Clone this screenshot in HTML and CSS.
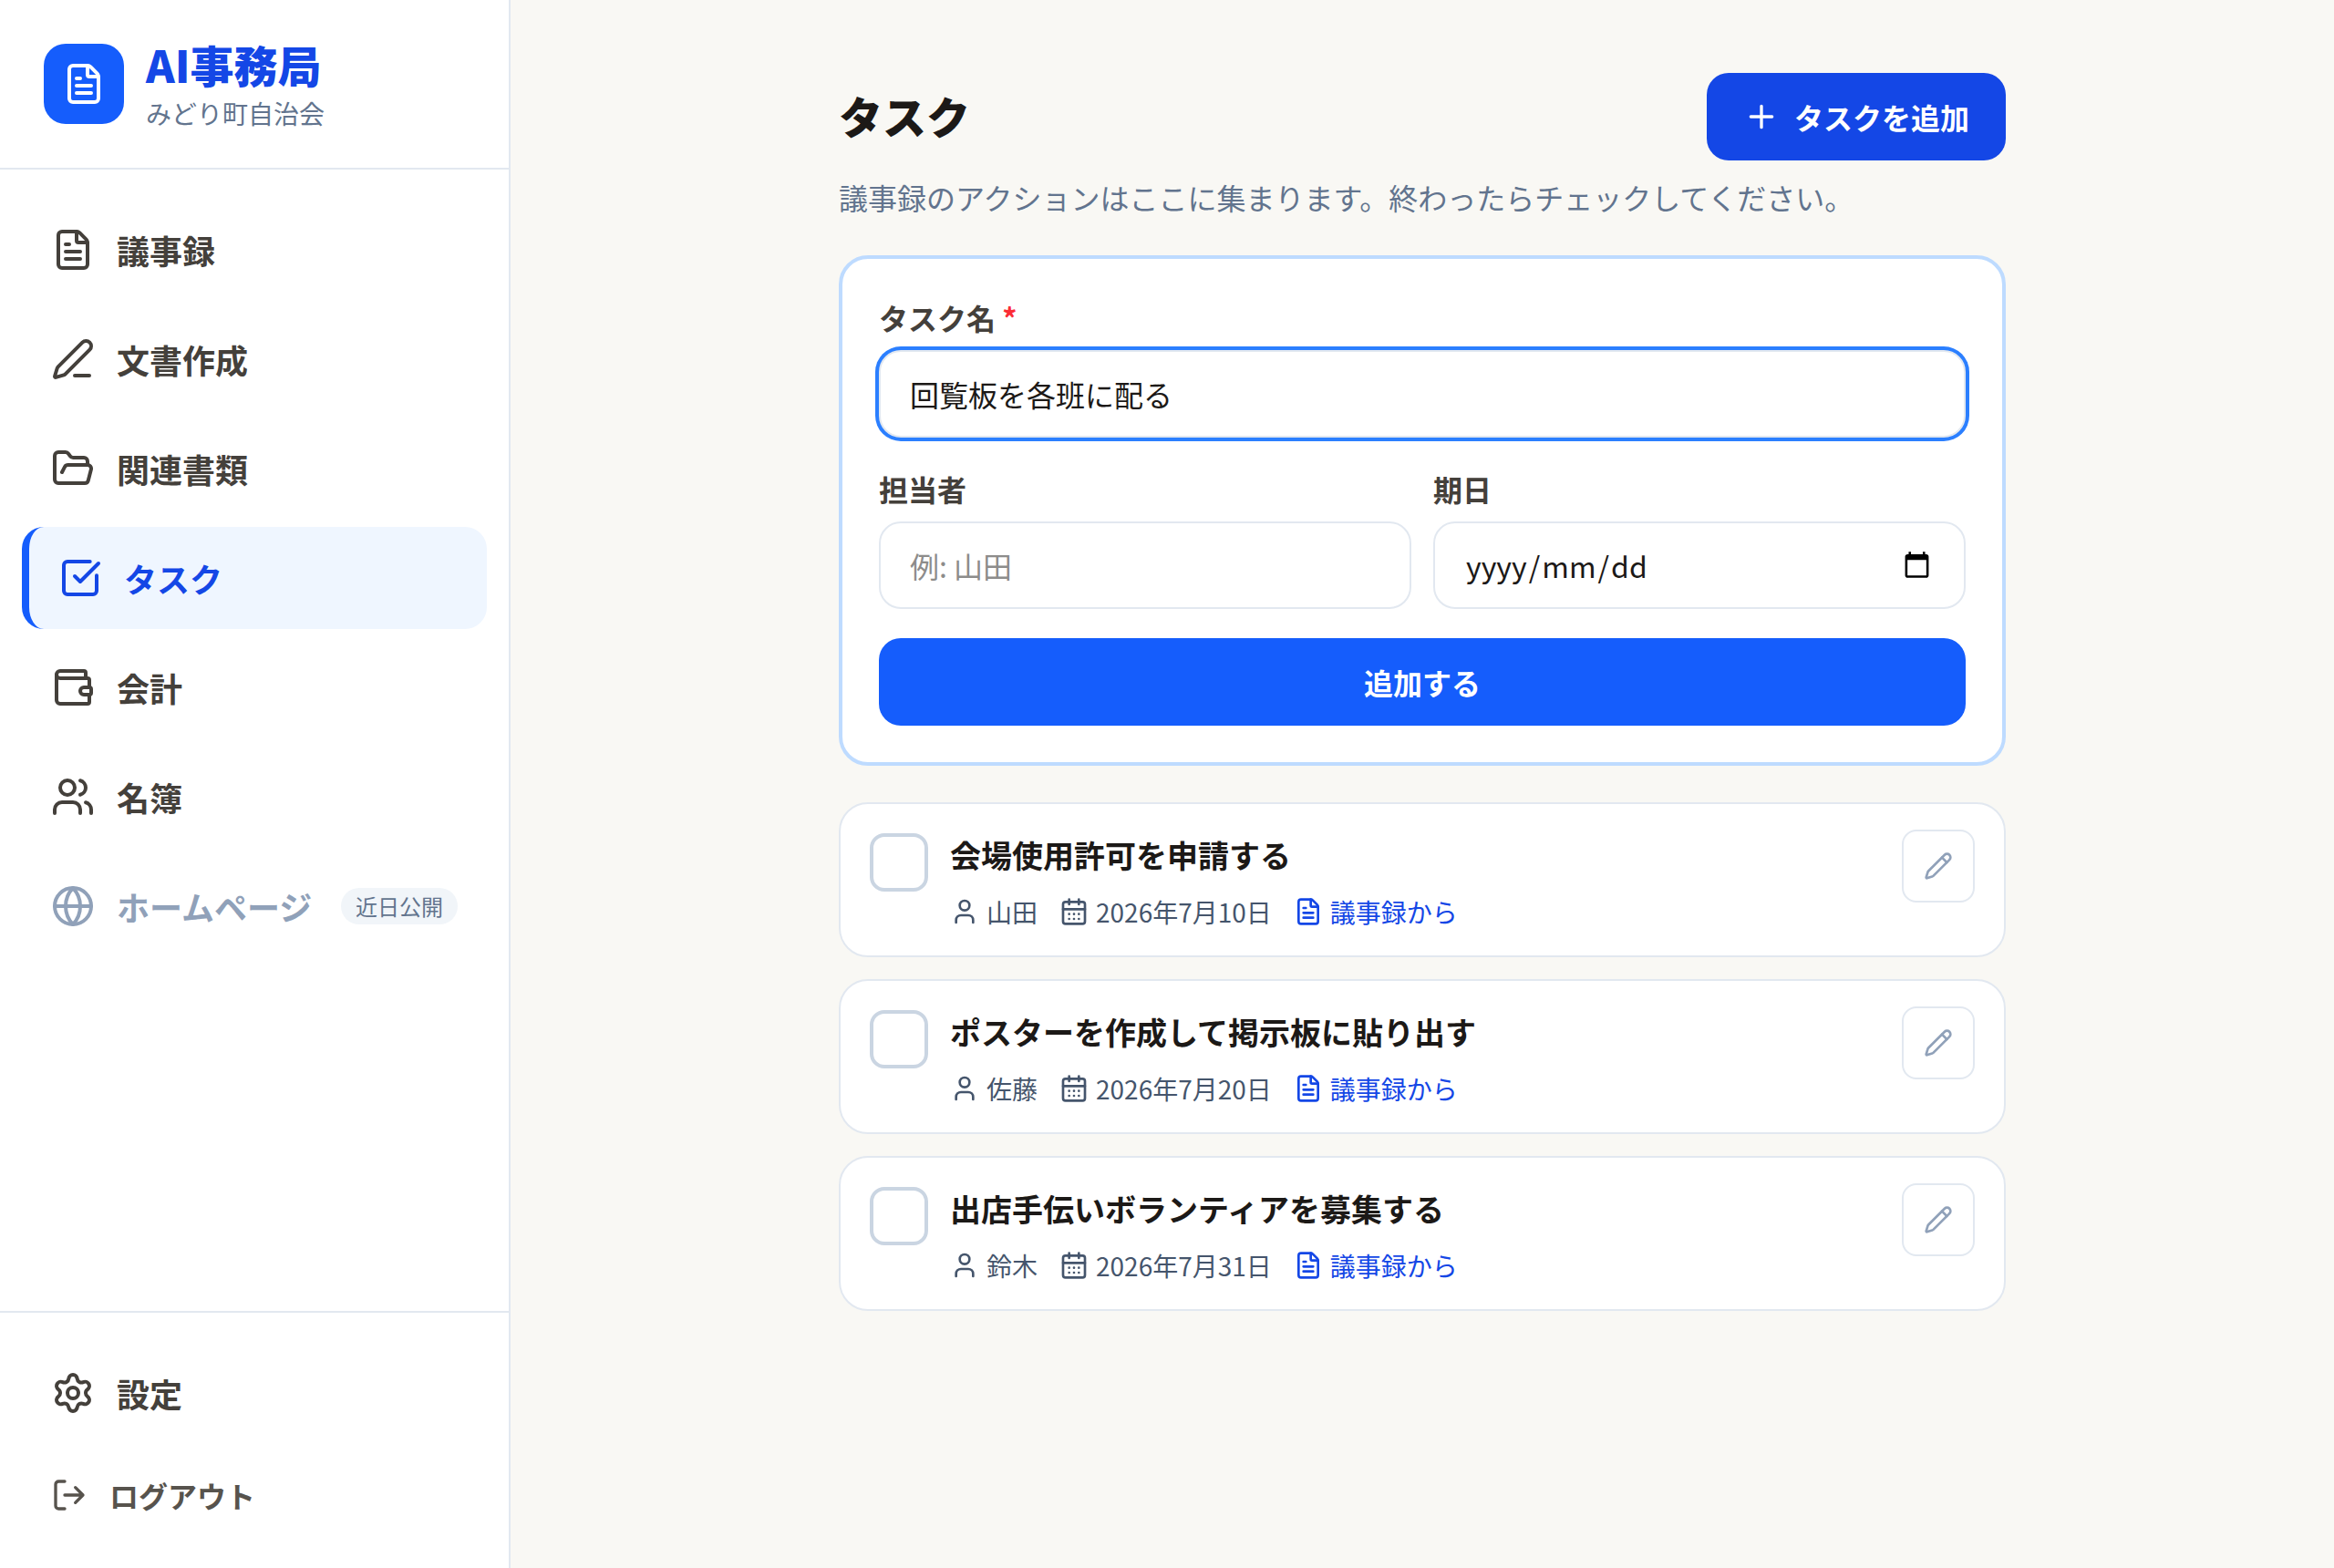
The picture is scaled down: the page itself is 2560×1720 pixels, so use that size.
FILE: index.html
```html
<!DOCTYPE html>
<html lang="ja">
<head>
    <meta charset="UTF-8" />
    <meta name="viewport" content="width=device-width, initial-scale=1" />
    <title>タスク | AI事務局</title>
    <link rel="stylesheet" href="styles.css">
</head>
<body>
    <!-- Icon sprite -->
    <svg class="sprite" aria-hidden="true">
        <symbol id="file-text" viewBox="0 0 24 24">
            <path d="M6 22a2 2 0 0 1-2-2V4a2 2 0 0 1 2-2h8a2.4 2.4 0 0 1 1.704.706l3.588 3.588A2.4 2.4 0 0 1 20 8v12a2 2 0 0 1-2 2z" />
            <path d="M14 2v5a1 1 0 0 0 1 1h5M10 9H8M16 13H8M16 17H8" />
        </symbol>
        <symbol id="pen-line" viewBox="0 0 24 24">
            <path d="M13 21h8" />
            <path d="M21.174 6.812a1 1 0 0 0-3.986-3.987L3.842 16.174a2 2 0 0 0-.5.83l-1.321 4.352a.5.5 0 0 0 .623.622l4.353-1.32a2 2 0 0 0 .83-.497z" />
        </symbol>
        <symbol id="pencil" viewBox="0 0 24 24">
            <path d="M21.174 6.812a1 1 0 0 0-3.986-3.987L3.842 16.174a2 2 0 0 0-.5.83l-1.321 4.352a.5.5 0 0 0 .623.622l4.353-1.32a2 2 0 0 0 .83-.497z" />
            <path d="m15 5 4 4" />
        </symbol>
        <symbol id="folder-open" viewBox="0 0 24 24">
            <path d="m6 14 1.5-2.9A2 2 0 0 1 9.24 10H20a2 2 0 0 1 1.94 2.5l-1.54 6a2 2 0 0 1-1.95 1.5H4a2 2 0 0 1-2-2V5a2 2 0 0 1 2-2h3.9a2 2 0 0 1 1.69.9l.81 1.2a2 2 0 0 0 1.67.9H18a2 2 0 0 1 2 2v2" />
        </symbol>
        <symbol id="square-check" viewBox="0 0 24 24">
            <path d="M21 10.656V19a2 2 0 0 1-2 2H5a2 2 0 0 1-2-2V5a2 2 0 0 1 2-2h12.344" />
            <path d="m9 11 3 3L22 4" />
        </symbol>
        <symbol id="wallet" viewBox="0 0 24 24">
            <path d="M19 7V4a1 1 0 0 0-1-1H5a2 2 0 0 0 0 4h15a1 1 0 0 1 1 1v4h-3a2 2 0 0 0 0 4h3a1 1 0 0 0 1-1v-2a1 1 0 0 0-1-1" />
            <path d="M3 5v14a2 2 0 0 0 2 2h15a1 1 0 0 0 1-1v-4" />
        </symbol>
        <symbol id="users" viewBox="0 0 24 24">
            <path d="M16 21v-2a4 4 0 0 0-4-4H6a4 4 0 0 0-4 4v2M16 3.128a4 4 0 0 1 0 7.744M22 21v-2a4 4 0 0 0-3-3.87" />
            <circle cx="9" cy="7" r="4" />
        </symbol>
        <symbol id="globe" viewBox="0 0 24 24">
            <circle cx="12" cy="12" r="10" />
            <path d="M12 2a14.5 14.5 0 0 0 0 20 14.5 14.5 0 0 0 0-20M2 12h20" />
        </symbol>
        <symbol id="settings" viewBox="0 0 24 24">
            <path d="M9.671 4.136a2.34 2.34 0 0 1 4.659 0 2.34 2.34 0 0 0 3.319 1.915 2.34 2.34 0 0 1 2.33 4.033 2.34 2.34 0 0 0 0 3.831 2.34 2.34 0 0 1-2.33 4.033 2.34 2.34 0 0 0-3.319 1.915 2.34 2.34 0 0 1-4.659 0 2.34 2.34 0 0 0-3.32-1.915 2.34 2.34 0 0 1-2.33-4.033 2.34 2.34 0 0 0 0-3.831A2.34 2.34 0 0 1 6.35 6.051a2.34 2.34 0 0 0 3.319-1.915" />
            <circle cx="12" cy="12" r="3" />
        </symbol>
        <symbol id="log-out" viewBox="0 0 24 24">
            <path d="m16 17 5-5-5-5M21 12H9M9 21H5a2 2 0 0 1-2-2V5a2 2 0 0 1 2-2h4" />
        </symbol>
        <symbol id="plus" viewBox="0 0 24 24">
            <path d="M5 12h14M12 5v14" />
        </symbol>
        <symbol id="user" viewBox="0 0 24 24">
            <path d="M19 21v-2a4 4 0 0 0-4-4H9a4 4 0 0 0-4 4v2" />
            <circle cx="12" cy="7" r="4" />
        </symbol>
        <symbol id="calendar-days" viewBox="0 0 24 24">
            <path d="M8 2v4M16 2v4M3 10h18" />
            <rect width="18" height="18" x="3" y="4" rx="2" />
            <path d="M8 14h.01M12 14h.01M16 14h.01M8 18h.01M12 18h.01M16 18h.01" />
        </symbol>
    </svg>

    <div class="layout">
        <aside class="sidebar">
            <div class="brand">
                <div class="brand-logo"><svg class="icon"><use href="#file-text" /></svg></div>
                <div>
                    <div class="brand-name">AI事務局</div>
                    <div class="brand-org">みどり町自治会</div>
                </div>
            </div>

            <nav class="nav">
                <a class="nav-item"><svg class="icon"><use href="#file-text" /></svg>議事録</a>
                <a class="nav-item"><svg class="icon"><use href="#pen-line" /></svg>文書作成</a>
                <a class="nav-item"><svg class="icon"><use href="#folder-open" /></svg>関連書類</a>
                <a class="nav-item active"><svg class="icon"><use href="#square-check" /></svg>タスク</a>
                <a class="nav-item"><svg class="icon"><use href="#wallet" /></svg>会計</a>
                <a class="nav-item"><svg class="icon"><use href="#users" /></svg>名簿</a>
                <div class="nav-item disabled"><svg class="icon"><use href="#globe" /></svg>ホームページ<span class="badge">近日公開</span></div>
            </nav>

            <div class="sidebar-footer">
                <a class="nav-item"><svg class="icon"><use href="#settings" /></svg>設定</a>
                <a class="nav-item logout"><svg class="icon icon-md"><use href="#log-out" /></svg>ログアウト</a>
            </div>
        </aside>

        <main class="main">
            <div class="container">
                <div class="page-header">
                    <h1>タスク</h1>
                    <button class="btn btn-add" type="button"><svg class="icon icon-md"><use href="#plus" /></svg>タスクを追加</button>
                </div>
                <p class="lead">議事録のアクションはここに集まります。終わったらチェックしてください。</p>

                <form class="task-form">
                    <div class="field">
                        <label for="taskName">タスク名 <span class="required">*</span></label>
                        <input class="input focused" id="taskName" type="text" value="回覧板を各班に配る">
                    </div>
                    <div class="field-row">
                        <div class="field">
                            <label for="assignee">担当者</label>
                            <input class="input" id="assignee" type="text" placeholder="例: 山田">
                        </div>
                        <div class="field">
                            <label>期日</label>
                            <div class="input date-input">
                                <span class="date-text"><span>yyyy</span>/<span>mm</span>/<span>dd</span></span>
                                <svg class="date-icon" viewBox="0 0 24 24"><path d="M20 3h-1V1h-2v2H7V1H5v2H4c-1.100 0-2 .9-2 2v16c0 1.100.9 2 2 2h16c1.100 0 2-.9 2-2V5c0-1.100-.9-2-2-2zm0 18H4V8h16v13z" /></svg>
                            </div>
                        </div>
                    </div>
                    <button class="btn btn-submit" type="button">追加する</button>
                </form>

                <ul class="task-list">
                    <li class="task">
                        <button class="check" type="button" aria-label="完了にする"></button>
                        <div class="task-body">
                            <div class="task-title">会場使用許可を申請する</div>
                            <div class="task-meta">
                                <span><svg class="icon icon-sm"><use href="#user" /></svg>山田</span>
                                <span><svg class="icon icon-sm"><use href="#calendar-days" /></svg>2026年7月10日</span>
                                <a><svg class="icon icon-sm"><use href="#file-text" /></svg>議事録から</a>
                            </div>
                        </div>
                        <button class="edit" type="button" aria-label="編集"><svg class="icon icon-sm"><use href="#pencil" /></svg></button>
                    </li>
                    <li class="task">
                        <button class="check" type="button" aria-label="完了にする"></button>
                        <div class="task-body">
                            <div class="task-title">ポスターを作成して掲示板に貼り出す</div>
                            <div class="task-meta">
                                <span><svg class="icon icon-sm"><use href="#user" /></svg>佐藤</span>
                                <span><svg class="icon icon-sm"><use href="#calendar-days" /></svg>2026年7月20日</span>
                                <a><svg class="icon icon-sm"><use href="#file-text" /></svg>議事録から</a>
                            </div>
                        </div>
                        <button class="edit" type="button" aria-label="編集"><svg class="icon icon-sm"><use href="#pencil" /></svg></button>
                    </li>
                    <li class="task">
                        <button class="check" type="button" aria-label="完了にする"></button>
                        <div class="task-body">
                            <div class="task-title">出店手伝いボランティアを募集する</div>
                            <div class="task-meta">
                                <span><svg class="icon icon-sm"><use href="#user" /></svg>鈴木</span>
                                <span><svg class="icon icon-sm"><use href="#calendar-days" /></svg>2026年7月31日</span>
                                <a><svg class="icon icon-sm"><use href="#file-text" /></svg>議事録から</a>
                            </div>
                        </div>
                        <button class="edit" type="button" aria-label="編集"><svg class="icon icon-sm"><use href="#pencil" /></svg></button>
                    </li>
                </ul>
            </div>
        </main>
    </div>
</body>
</html>
```

FILE: styles.css
```css
* {
    box-sizing: border-box;
    margin: 0;
    padding: 0;
}
body {
    font-family: "Noto Sans CJK JP", sans-serif;
    font-size: 32px;
    line-height: 52px;
    background: #f9f8f4;
    color: #1c1917;
}
button, input {
    font: inherit;
    color: inherit;
}
.sprite {
    display: none;
}
.icon {
    width: 48px;
    height: 48px;
    flex-shrink: 0;
    fill: none;
    stroke: currentColor;
    stroke-width: 2;
    stroke-linecap: round;
    stroke-linejoin: round;
}
.icon-md {
    width: 40px;
    height: 40px;
}
.icon-sm {
    width: 32px;
    height: 32px;
}
.layout {
    display: flex;
    height: 100vh;
}

/* Sidebar */
.sidebar {
    display: flex;
    flex-direction: column;
    width: 560px;
    background: white;
    border-right: 2px solid #e2e8f0;
}
.brand {
    display: flex;
    align-items: center;
    gap: 24px;
    height: 186px;
    padding: 0 48px;
    border-bottom: 2px solid #e2e8f0;
}
.brand-logo {
    display: flex;
    align-items: center;
    justify-content: center;
    width: 88px;
    height: 88px;
    border-radius: 24px;
    background: #155dfc;
    color: white;
}
.brand-name {
    font-size: 48px;
    font-weight: 800;
    line-height: 64px;
    color: #1447e6;
}
.brand-org {
    font-size: 28px;
    line-height: 44px;
    color: #62748e;
}
.nav, .sidebar-footer {
    display: flex;
    flex-direction: column;
    gap: 8px;
    padding: 32px 24px;
}
.nav {
    flex: 1;
}
.sidebar-footer {
    border-top: 2px solid #e2e8f0;
}
.nav-item {
    display: flex;
    align-items: center;
    gap: 24px;
    height: 112px;
    padding: 0 32px;
    border-radius: 24px;
    font-size: 36px;
    font-weight: 700;
    color: #44403b;
}
.nav-item.active {
    border-left: 8px solid #155dfc;
    background: #eff6ff;
    color: #1447e6;
}
.nav-item.disabled {
    color: #90a1b9;
}
.nav-item.logout {
    height: 96px;
    font-size: 32px;
    color: #57534d;
}
.badge {
    margin-left: auto;
    padding: 0 16px;
    border-radius: 20px;
    background: #f1f5f9;
    font-size: 24px;
    font-weight: 400;
    line-height: 40px;
    color: #62748e;
}

/* Main */
.main {
    flex: 1;
    padding-top: 80px;
}
.container {
    width: 1280px;
    margin: 0 auto;
}
.page-header {
    display: flex;
    align-items: center;
    justify-content: space-between;
}
h1 {
    padding-bottom: 4px;
    font-size: 48px;
    font-weight: 800;
    line-height: 64px;
}
.btn {
    display: flex;
    align-items: center;
    justify-content: center;
    gap: 16px;
    height: 96px;
    padding: 0 40px;
    border: none;
    border-radius: 24px;
    font-weight: 700;
    color: white;
}
.btn-add {
    background: #1447e6;
}
.btn-submit {
    width: 100%;
    background: #155dfc;
}
.lead {
    margin: 14px 0 38px;
    color: #62748e;
}
.task-form {
    display: flex;
    flex-direction: column;
    gap: 32px;
    padding: 40px;
    border: 4px solid #bedbff;
    border-radius: 32px;
    background: white;
}
.field-row {
    display: grid;
    grid-template-columns: 1fr 1fr;
    gap: 24px;
}
.field label {
    display: block;
    margin-bottom: 12px;
    font-weight: 700;
    line-height: 48px;
    color: #44403b;
}
.required {
    color: #fb2c36;
}
.input {
    display: block;
    width: 100%;
    height: 96px;
    padding: 0 32px;
    border: 2px solid #e2e8f0;
    border-radius: 24px;
    background: white;
    outline: none;
}
.input.focused {
    box-shadow: 0 0 0 4px #2b7fff;
}
.input::placeholder {
    color: #8d8c8b;
}
.date-input {
    display: flex;
    align-items: center;
    justify-content: space-between;
}
.date-text span {
    padding: 0 2px;
}
.date-icon {
    width: 31px;
    height: 31px;
    margin: 0 4px 2px 0;
}

/* Task list */
.task-list {
    display: flex;
    flex-direction: column;
    gap: 24px;
    margin-top: 40px;
    list-style: none;
}
.task {
    display: flex;
    align-items: flex-start;
    gap: 24px;
    padding: 28px 32px;
    border: 2px solid #e2e8f0;
    border-radius: 32px;
    background: white;
}
.check {
    width: 64px;
    height: 64px;
    margin-top: 4px;
    border: 4px solid #cad5e2;
    border-radius: 16px;
    background: white;
}
.task-body {
    flex: 1;
}
.task-title {
    font-size: 34px;
    font-weight: 700;
    line-height: 56px;
}
.task-meta {
    display: flex;
    gap: 24px;
    margin-top: 14px;
    font-size: 28px;
    line-height: 40px;
    color: #45556c;
}
.task-meta > * {
    display: flex;
    align-items: center;
    gap: 8px;
}
.task-meta a {
    color: #1447e6;
}
.edit {
    display: flex;
    align-items: center;
    justify-content: center;
    width: 80px;
    height: 80px;
    border: 2px solid #e2e8f0;
    border-radius: 16px;
    background: white;
    color: #90a1b9;
}
```
